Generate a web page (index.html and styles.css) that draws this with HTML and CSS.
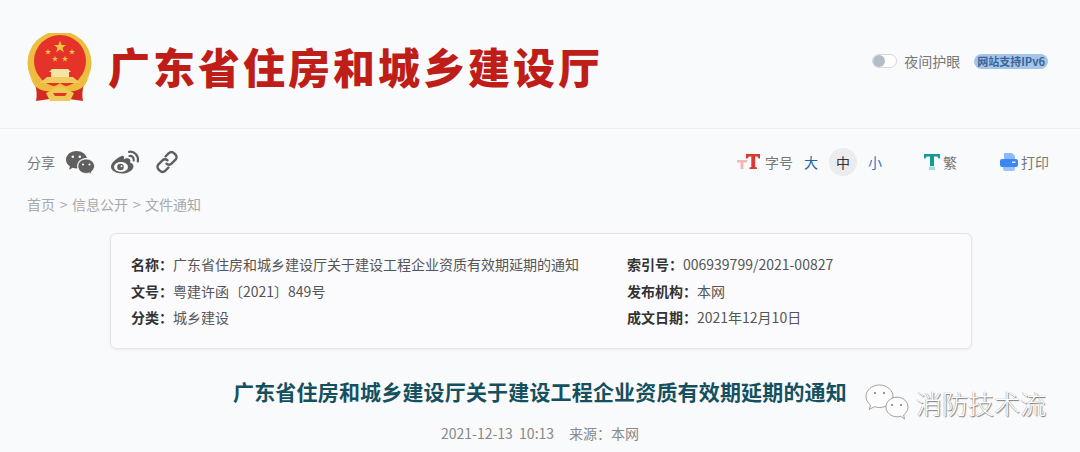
FILE: index.html
```html
<!DOCTYPE html>
<html lang="zh-CN">
<head>
  <meta charset="UTF-8">
  <title>广东省住房和城乡建设厅</title>
  <link rel="stylesheet" href="styles.css">
</head>
<body>
  <header class="site-header">
    <div class="brand">
      <svg class="emblem" width="66" height="70" viewBox="0 0 66 70">
        <defs>
          <polygon id="star" points="0,-10 2.35,-3.24 9.51,-3.09 3.8,1.24 5.88,8.09 0,4 -5.88,8.09 -3.8,1.24 -9.51,-3.09 -2.35,-3.24"/>
        </defs>
        <circle cx="32.5" cy="30" r="32" fill="#ecbd3e"/>
        <circle cx="33" cy="28" r="26" fill="#e5332a"/>
        <g fill="#f0c443">
          <use href="#star" transform="translate(33 14) scale(.65)"/>
          <use href="#star" transform="translate(21 19) scale(.32)"/>
          <use href="#star" transform="translate(45 19) scale(.32)"/>
          <use href="#star" transform="translate(28 26) scale(.32)"/>
          <use href="#star" transform="translate(38 26) scale(.32)"/>
        </g>
        <path d="M25 36h16l3 3h-2v5H24v-5h-2z" fill="#f6e3a6"/>
        <path d="M13 50l7-6h26l7 6z" fill="#efcb62"/>
        <path d="M8 51c2 7 2 12 1 17l14-2 2-8z" fill="#d22a22"/>
        <path d="M57 51c-2 7-2 12-1 17l-14-2-2-8z" fill="#d22a22"/>
        <path d="M3 44c9 10 21 13 30 6 9 7 20 4 29-6l-4 8c-8 8-18 8-25 3-7 5-18 5-26-3z" fill="#ecbd3e"/>
        <path d="M25 57c3-4 13-4 16 0l6 3-4 8H23l-4-8z" fill="#f1ca55"/>
        <path d="M26 60h14l-2 3H28z" fill="#e5332a"/>
      </svg>
      <div class="site-name">广东省住房和城乡建设厅</div>
    </div>
    <div class="header-tools">
      <span class="night-toggle"><span class="night-knob"></span></span>
      <span class="night-label">夜间护眼</span>
      <span class="ipv6">网站支持IPv6</span>
    </div>
  </header>

  <main>
    <div class="toolbar">
      <div class="share">
        <span class="share-label">分享</span>
        <div class="share-icons">
          <svg width="30" height="24" viewBox="0 0 30 24" fill="#5f5f5f">
            <path d="M11.5 1C5.6 1 1 5 1 9.8c0 2.8 1.5 5 4 6.7l-1 3.2 3.7-1.9c1.3.4 2.5.6 3.8.6.4 0 .7 0 1-.1-.2-.7-.3-1.4-.3-2.100 0-4.500 3.900-8.100 8.800-8.100.3 0 .7 0 1 .1C21 3.900 16.700 1 11.500 1z"/>
            <path d="M29.500 16.200c0-4-3.900-7.200-8.300-7.200-4.700 0-8.300 3.200-8.300 7.200s3.600 7.200 8.300 7.200c1 0 2-.3 2.900-.5l2.700 1.500-.7-2.500c2-1.500 3.400-3.500 3.400-5.700z" stroke="#f9fafc" stroke-width=".8"/>
            <circle cx="7.800" cy="6.800" r="1.300" fill="#f9fafc"/>
            <circle cx="14.800" cy="6.800" r="1.300" fill="#f9fafc"/>
            <circle cx="18" cy="14.500" r="1.100" fill="#f9fafc"/>
            <circle cx="24.500" cy="14.500" r="1.100" fill="#f9fafc"/>
          </svg>
          <svg width="30" height="24" viewBox="0 0 30 24" fill="none">
            <path d="M11.500 6C6 8.500 1 13 1 16.800 1 20.800 6.500 23.500 11.800 23.500c6.700 0 11.700-3.700 11.700-7.300 0-2.200-2-3.200-3.500-3.600.8-2 .4-3.800-1.500-4.200-1.700-.4-3.700.4-4.700 1 .7-2.400 0-4.400-2.300-3.400z" fill="#5f5f5f"/>
            <ellipse cx="11" cy="17" rx="7" ry="5" fill="#f9fafc"/>
            <circle cx="10.500" cy="17" r="3.300" fill="#5f5f5f"/>
            <circle cx="11.500" cy="16.200" r="1" fill="#f9fafc"/>
            <path d="M19 1.800C24.500 1 29 6 27.800 11.500M19.500 6c2.500-.5 4.700 1.800 4.200 4.500" stroke="#5f5f5f" stroke-width="2.200" stroke-linecap="round"/>
          </svg>
          <svg width="24" height="24" viewBox="0 0 24 24" fill="none" stroke="#5f5f5f" stroke-width="2.400" stroke-linecap="round">
            <path d="M10.500 6.500l3.300-3.300a3.500 3.500 0 0 1 5.200 0l1.500 1.500a3.500 3.500 0 0 1 0 5L16.500 13.700a3.500 3.500 0 0 1-5 0"/>
            <path d="M13.500 17.500l-3.300 3.300a3.500 3.500 0 0 1-5.200 0l-1.500-1.500a3.500 3.500 0 0 1 0-5L7.500 10.300a3.500 3.500 0 0 1 5 0"/>
          </svg>
        </div>
      </div>
      <div class="page-tools">
        <svg class="tool-icon-font" width="23" height="16" viewBox="0 0 23 16">
          <path d="M0 6h10v2.500H6.500V15h-3V8.500H0z" fill="#f0b9b4"/>
          <path d="M9 0h14v4.500h-1.500l-1-2h-2.300V13l1.800.6V15h-7.500v-1.400l1.800-.6V2.500H12l-1.500 2H9z" fill="#da3a32"/>
        </svg>
        <span class="tool-text">字号</span>
        <span class="size-btn size-large">大</span>
        <span class="size-btn size-mid">中</span>
        <span class="size-btn size-small">小</span>
        <svg class="tool-icon-trad" width="16" height="16" viewBox="0 0 16 16">
          <path d="M0 0h16v4.500h-1.500l-1-2H10V12H6V2.500H2.500l-1 2H0z" fill="#129a99"/>
          <path d="M5 12.500h6V16H5z" fill="#a9d9d8"/>
        </svg>
        <span class="tool-text">繁</span>
        <svg class="tool-icon-print" width="18" height="18" viewBox="0 0 18 18">
          <path d="M4 0h8l3 3v5H4z" fill="#8db8fb"/>
          <rect x="0" y="6" width="18" height="8" rx="2" fill="#3d87f5"/>
          <path d="M3 14h12v2a2 2 0 0 1-2 2H5a2 2 0 0 1-2-2z" fill="#9cc2fb"/>
          <rect x="12" y="8.500" width="3.500" height="1.500" fill="#dcebff"/>
        </svg>
        <span class="tool-text">打印</span>
      </div>
    </div>

    <nav class="crumbs">首页 &gt; 信息公开 &gt; 文件通知</nav>

    <section class="info-card">
      <div class="info-col info-col-left">
        <p><b>名称：</b>广东省住房和城乡建设厅关于建设工程企业资质有效期延期的通知</p>
        <p><b>文号：</b>粤建许函〔2021〕849号</p>
        <p><b>分类：</b>城乡建设</p>
      </div>
      <div class="info-col">
        <p><b>索引号：</b>006939799/2021-00827</p>
        <p><b>发布机构：</b>本网</p>
        <p><b>成文日期：</b>2021年12月10日</p>
      </div>
    </section>

    <h1 class="article-title">广东省住房和城乡建设厅关于建设工程企业资质有效期延期的通知</h1>
    <div class="article-meta"><span>2021-12-13&nbsp;&nbsp;10:13</span><span>来源：本网</span></div>
  </main>

  <div class="watermark">
    <svg width="44" height="38" viewBox="0 0 44 38" fill="#fdfdfd" stroke="#8a8a8a" stroke-width=".8">
      <path d="M14.500 1C7 1 1 6 1 12.500c0 3.500 1.800 6.500 4.500 8.600L4.300 25.500l5-2.800c1.600.5 3.300.8 5 .8C22 23.500 28 18.500 28 12.500S22 1 14.500 1z"/>
      <path d="M43 23c0-5.500-5-9.800-11-9.800S21 17.500 21 23s5 9.800 11 9.800c1.300 0 2.600-.2 3.800-.6L39.500 35 38.600 31C41.300 29 43 26.200 43 23z"/>
      <circle cx="10" cy="9" r="1" fill="#777" stroke="none"/>
      <circle cx="19" cy="9" r="1" fill="#777" stroke="none"/>
      <circle cx="27" cy="21" r="1" fill="#777" stroke="none"/>
      <circle cx="36" cy="21" r="1" fill="#777" stroke="none"/>
    </svg>
    <span class="watermark-text">消防技术流</span>
  </div>
</body>
</html>
```

FILE: styles.css
```css
* {
  box-sizing: border-box;
  margin: 0;
  padding: 0;
}

html, body {
  height: 452px;
  overflow: hidden;
}

body {
  position: relative;
  font-family: "Noto Sans CJK SC", "Noto Sans", sans-serif;
  background: #f9fafc;
  color: #666;
}

.site-header {
  display: flex;
  justify-content: space-between;
  align-items: center;
  height: 129px;
  padding: 0 32px 0 27px;
  border-bottom: 1px solid #edeef1;
}

.brand {
  display: flex;
  align-items: center;
  gap: 15px;
}

.emblem {
  margin-top: 7px;
}

.site-name {
  margin-top: 3px;
  font-size: 42px;
  font-weight: 900;
  letter-spacing: 3px;
  line-height: 1;
  color: #bf1e18;
}

.header-tools {
  display: flex;
  align-items: center;
  margin-bottom: 6px;
}

.night-toggle {
  width: 25px;
  height: 14px;
  margin-left: 1px;
  border-radius: 7px;
  background: #fff;
  border: 1px solid #d5d8dc;
  margin-right: 7px;
}

.night-knob {
  display: block;
  width: 12px;
  height: 12px;
  border-radius: 50%;
  background: #b4bcc6;
}

.night-label {
  font-size: 14px;
  color: #777;
  margin-right: 14px;
}

.ipv6 {
  font-size: 11px;
  font-weight: 700;
  line-height: 15px;
  padding: 0 3px;
  border-radius: 8px;
  background: #a5c4e6;
  color: #3a659b;
}

.toolbar {
  display: flex;
  justify-content: space-between;
  align-items: center;
  height: 40px;
  margin-top: 13px;
  padding: 0 31px 0 27px;
}

.share {
  display: flex;
  align-items: center;
  gap: 10px;
}

.share-icons {
  display: flex;
  align-items: center;
  gap: 15px;
}

.share-label {
  font-size: 14px;
  color: #777;
}

.page-tools {
  display: flex;
  align-items: center;
  font-size: 14px;
}

.tool-text {
  margin-left: 3px;
  color: #777;
}

.tool-icon-font {
  margin-right: 2px;
}

.tool-icon-trad {
  margin-left: 35px;
}

.tool-icon-print {
  margin-left: 43px;
}

.size-btn {
  width: 28px;
  height: 28px;
  margin-left: 4px;
  line-height: 28px;
  border-radius: 50%;
  text-align: center;
}

.size-large {
  color: #1a66a8;
}

.size-mid {
  background: #eaecef;
  color: #333;
}

.size-small {
  color: #2f78b5;
}

.crumbs {
  margin-top: 12px;
  padding-left: 27px;
  font-size: 14px;
  line-height: 20px;
  word-spacing: 1.500px;
  color: #a9a9a9;
}

.info-card {
  display: flex;
  width: 862px;
  height: 116px;
  margin: 19px 0 0 110px;
  padding: 17px 20px;
  background: #fbfbfd;
  border: 1px solid #e3e4e7;
  border-radius: 6px;
  box-shadow: 0 1px 3px rgba(0, 0, 0, 0.06);
  font-size: 14px;
  line-height: 26.500px;
  color: #555;
}

.info-col-left {
  width: 496px;
}

.info-col b {
  font-weight: 700;
  color: #333;
}

.article-title {
  margin-top: 26px;
  text-align: center;
  font-size: 21px;
  font-weight: 700;
  letter-spacing: 0.170px;
  line-height: 32px;
  color: #15505f;
}

.article-meta {
  display: flex;
  justify-content: center;
  gap: 15px;
  margin-top: 17px;
  font-size: 14px;
  line-height: 18px;
  color: #888;
}

.watermark {
  position: absolute;
  left: 865px;
  top: 384px;
  display: flex;
  align-items: center;
  gap: 7px;
}

.watermark-text {
  font-size: 26px;
  font-weight: 300;
  line-height: 38px;
  color: #fff;
  text-shadow: 1px 1px 1px #777, -0.500px 0 0 #aaa;
}
```
